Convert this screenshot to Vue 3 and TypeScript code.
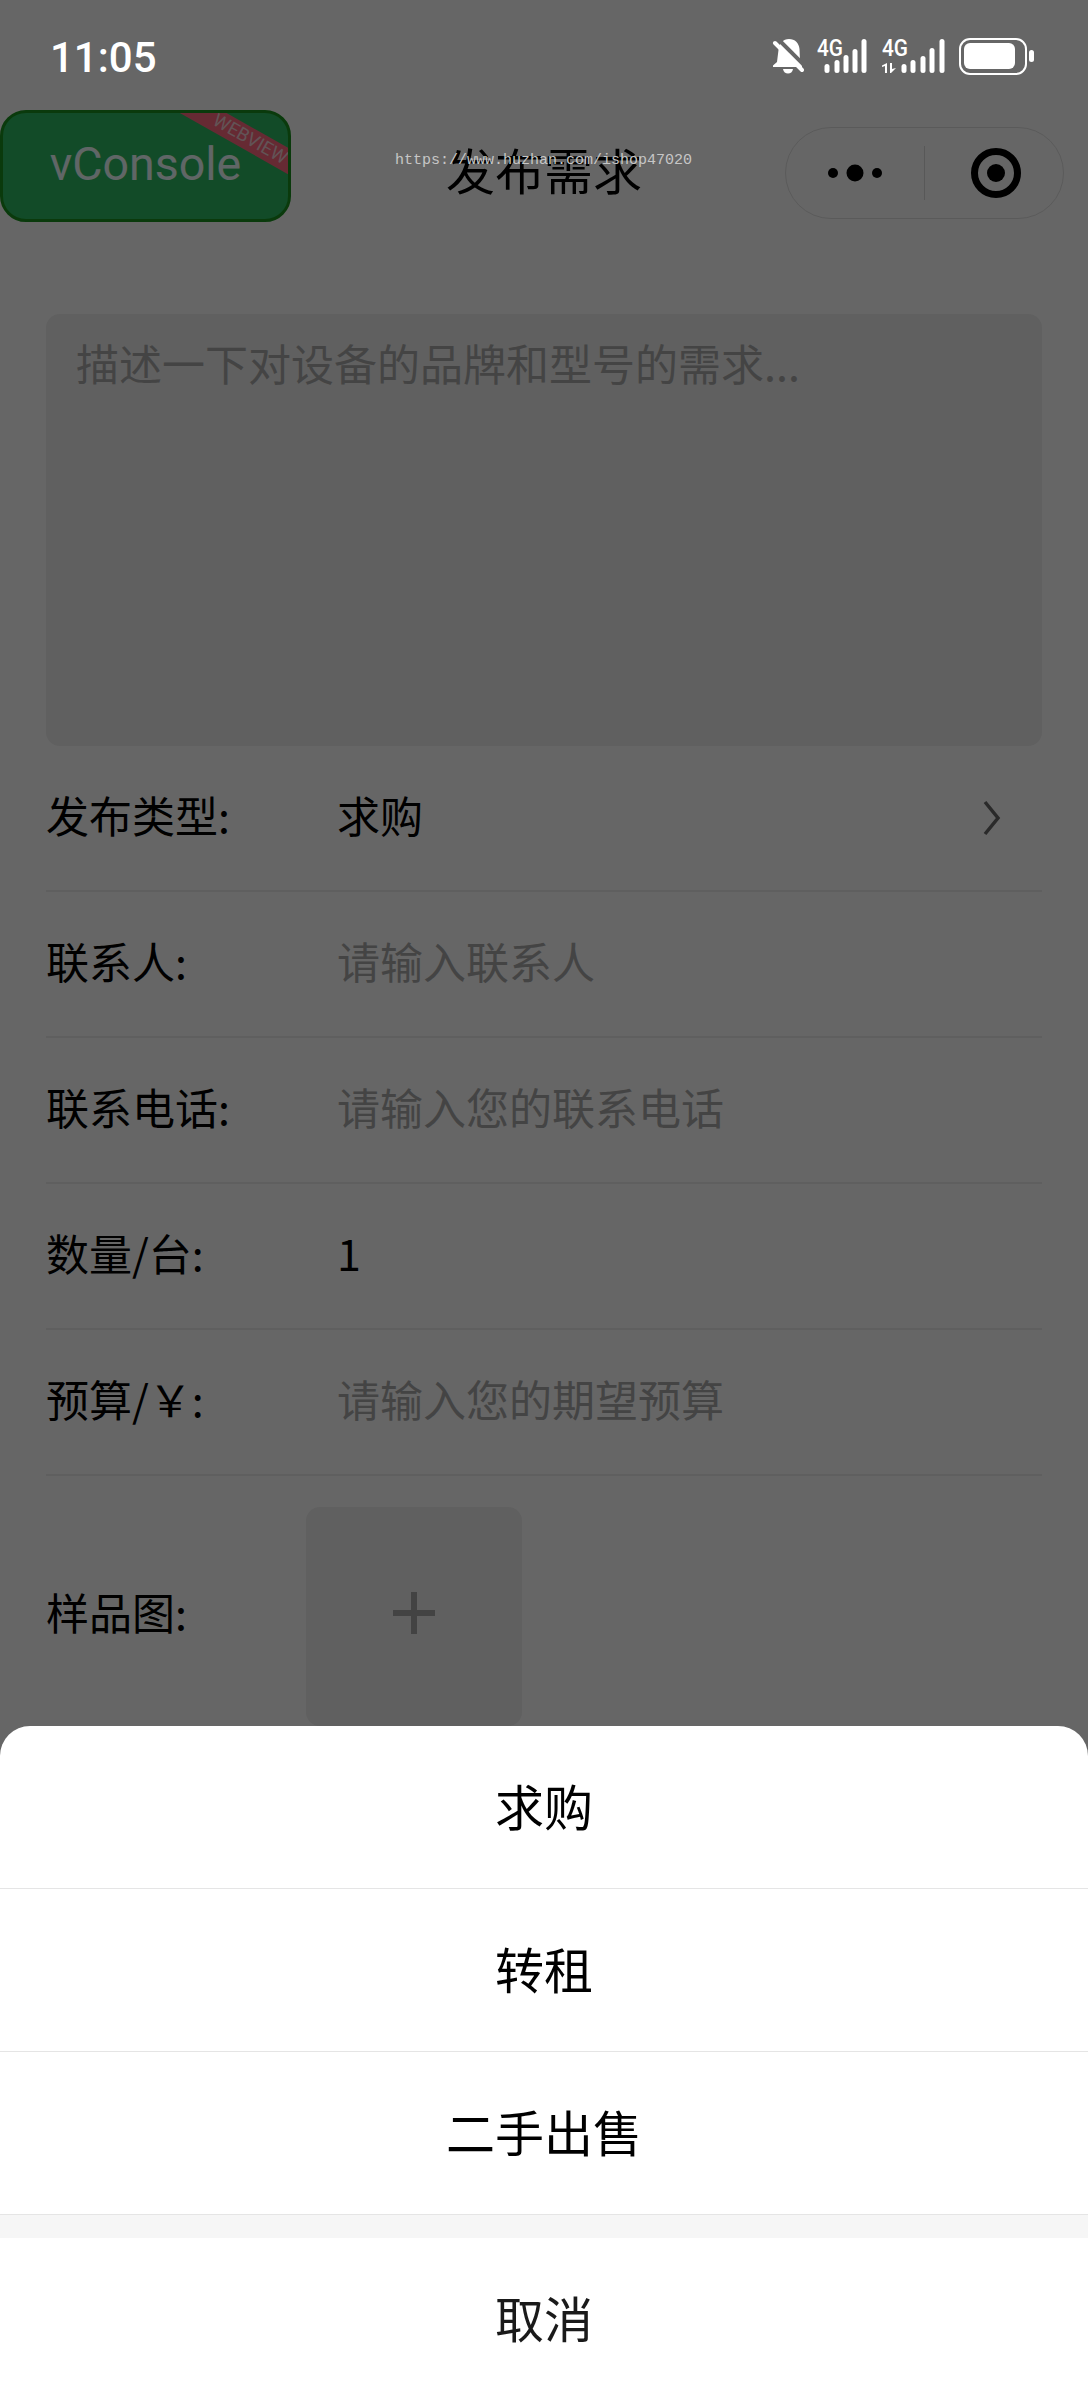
<script setup lang="ts">
interface Row { label: string; value: string; placeholder?: boolean; arrow?: boolean }
interface Bar { x: number; h: number }
const rows: Row[] = [
  { label: '发布类型:', value: '求购', arrow: true },
  { label: '联系人:', value: '请输入联系人', placeholder: true },
  { label: '联系电话:', value: '请输入您的联系电话', placeholder: true },
  { label: '数量/台:', value: '1' },
  { label: '预算/￥:', value: '请输入您的期望预算', placeholder: true },
]
const options: string[] = ['求购', '转租', '二手出售']
const bars1: Bar[] = [
  { x: 7.5, h: 9 }, { x: 17.5, h: 13 }, { x: 26.5, h: 18 }, { x: 35.5, h: 24 }, { x: 44.5, h: 34 },
]
const bars2: Bar[] = [
  { x: 19.5, h: 9 }, { x: 28.5, h: 13 }, { x: 38.5, h: 17 }, { x: 47.5, h: 25 }, { x: 57.5, h: 34 },
]
</script>

<template>
  <div class="page">
    <div class="status">
      <span class="time">11:05</span>
      <div class="status-icons">
        <svg class="bell" width="32" height="36" viewBox="0 0 32 36">
          <path d="M17 1c6 0 10 4 10.500 10l.5 12 2 5v1H1v-1.500l4-3.500 1.500-12C7.500 5 11 1 17 1z" fill="#fff" />
          <path d="M11 31h10c-.5 3-2.500 4.500-5 4.500s-4.500-1.500-5-4.500z" fill="#fff" />
          <path d="M5 0l30 30" stroke="#666" stroke-width="4" />
          <path d="M3 5l27 27" stroke="#fff" stroke-width="4" stroke-linecap="round" />
        </svg>
        <svg class="sig" width="52" height="36" viewBox="0 0 52 36">
          <text x="0" y="18" class="net" textLength="26" lengthAdjust="spacingAndGlyphs">4G</text>
          <g fill="#fff">
            <rect v-for="b in bars1" :key="b.x" :x="b.x" :y="35 - b.h" width="5" :height="b.h" rx="2.500" />
          </g>
        </svg>
        <svg class="sig2" width="63" height="36" viewBox="0 0 63 36">
          <text x="0" y="18" class="net" textLength="26" lengthAdjust="spacingAndGlyphs">4G</text>
          <g fill="#fff">
            <path d="M5 25v10H3v-7l-3 1v-1.500z" />
            <path d="M8 35V25h2v6l4-1-5 5z" />
            <rect v-for="b in bars2" :key="b.x" :x="b.x" :y="35 - b.h" width="5" :height="b.h" rx="2.500" />
          </g>
        </svg>
        <div class="battery"><div class="battery-fill"></div></div>
        <div class="nub"></div>
      </div>
    </div>

    <div class="nav">
      <span class="title">发布需求</span>
      <div class="capsule">
        <div class="cap-side">
          <svg width="62" height="20" viewBox="0 0 62 20">
            <circle cx="9" cy="10" r="5" fill="#000" />
            <circle cx="31" cy="10" r="8.500" fill="#000" />
            <circle cx="53" cy="10" r="5" fill="#000" />
          </svg>
        </div>
        <div class="cap-line"></div>
        <div class="cap-side">
          <svg class="record" width="52" height="52" viewBox="0 0 52 52">
            <circle cx="26" cy="26" r="21.500" fill="none" stroke="#000" stroke-width="7" />
            <circle cx="26" cy="26" r="9" fill="#000" />
          </svg>
        </div>
      </div>
    </div>

    <div class="form">
      <div class="textbox">描述一下对设备的品牌和型号的需求...</div>
      <div v-for="row in rows" :key="row.label" class="row">
        <span class="label">{{ row.label }}</span>
        <span class="value" :class="{ ph: row.placeholder }">{{ row.value }}</span>
        <svg v-if="row.arrow" class="chev" width="20" height="36" viewBox="0 0 20 36">
          <path d="M3 2l13 16L3 34" fill="none" stroke="#6a6a6a" stroke-width="3.500" />
        </svg>
      </div>
      <div class="upload-row">
        <span class="upload-label">样品图:</span>
        <div class="tile">
          <svg class="plus" width="42" height="42" viewBox="0 0 42 42">
            <path d="M21 0v42M0 21h42" stroke="#a8a8a8" stroke-width="6" />
          </svg>
        </div>
      </div>
    </div>

    <div class="vconsole">
      <span class="vc-text">vConsole</span>
      <div class="ribbon">WEBVIEW</div>
    </div>

    <div class="mask"></div>
    <div class="watermark">https://www.huzhan.com/ishop47020</div>

    <div class="sheet">
      <div v-for="o in options" :key="o" class="opt">{{ o }}</div>
      <div class="gap"></div>
      <div class="opt cancel">取消</div>
    </div>
  </div>
</template>

<style>
html, body { margin: 0; padding: 0; background: #666; }
</style>

<style scoped>
.page {
  position: relative;
  width: 1088px;
  height: 2400px;
  overflow: hidden;
  background: #fff;
  color: #000;
  font-family: "Noto Sans CJK SC", "Noto Sans", sans-serif;
}
.status {
  position: relative;
  z-index: 3;
  height: 110px;
  display: flex;
  align-items: flex-start;
  justify-content: space-between;
  padding: 0 54px 0 50px;
  box-sizing: border-box;
}
.time {
  margin-top: 29px;
  font: 500 42px/58px Roboto, sans-serif;
  color: #fff;
}
.status-icons {
  display: flex;
  align-items: center;
  height: 38px;
  margin-top: 37px;
}
.bell { margin-right: 13px; }
.sig { margin-right: 13px; }
.sig2 { margin-right: 14px; }
.net { font: 500 24px Roboto, sans-serif; fill: #fff; }
.battery {
  width: 68px;
  height: 37px;
  border: 2.500px solid #fff;
  border-radius: 11px;
  box-sizing: border-box;
  padding: 3px 2.500px;
}
.battery-fill {
  width: 51px;
  height: 26px;
  background: #fff;
  border-radius: 6px;
}
.nub {
  width: 5px;
  height: 12px;
  margin-left: 2px;
  background: #fff;
  border-radius: 2.500px;
}
.nav {
  position: relative;
  height: 126px;
  box-sizing: border-box;
  padding-bottom: 8px;
  display: flex;
  align-items: center;
  justify-content: center;
}
.title {
  font-size: 49px;
  line-height: 64px;
}
.capsule {
  position: absolute;
  top: 17px;
  left: 785px;
  width: 279px;
  height: 92px;
  display: flex;
  align-items: center;
  box-sizing: border-box;
  border: 1px solid #e2e2e2;
  border-radius: 46px;
}
.cap-side {
  flex: 1;
  display: flex;
  justify-content: center;
  align-items: center;
}
.record { margin-left: 4px; }
.cap-line {
  width: 1px;
  height: 54px;
  background: #dcdcdc;
}
.form {
  padding: 78px 46px 0;
}
.textbox {
  height: 432px;
  box-sizing: border-box;
  padding: 18px 30px;
  background: #f0f0f0;
  border-radius: 14px;
  font-size: 43px;
  line-height: 60px;
  color: #aaa;
}
.row {
  height: 146px;
  box-sizing: border-box;
  padding-bottom: 8px;
  display: flex;
  align-items: center;
  border-bottom: 2px solid #eee;
  font-size: 43px;
}
.label { width: 291px; flex: none; }
.value { flex: 1; }
.ph { color: #aaa; }
.chev { margin: 7px 40px 0 0; }
.upload-row {
  display: flex;
  align-items: center;
  padding-top: 31px;
  font-size: 43px;
}
.upload-label { width: 260px; flex: none; margin-bottom: 12px; }
.tile {
  width: 216px;
  height: 219px;
  border-radius: 14px;
  background: #f0f0f0;
  display: flex;
  align-items: center;
  justify-content: center;
}
.plus { margin-bottom: 8px; }
.vconsole {
  position: absolute;
  left: 0;
  top: 110px;
  width: 291px;
  height: 112px;
  box-sizing: border-box;
  border: 3.500px solid #19921e;
  border-radius: 26px;
  background: #2dbc64;
  overflow: hidden;
  display: flex;
  align-items: center;
  justify-content: center;
  color: #f0ffff;
  font: 400 46.500px Roboto, sans-serif;
}
.vc-text { margin-bottom: 4px; }
.ribbon {
  position: absolute;
  left: 162px;
  top: 15px;
  width: 170px;
  height: 23px;
  transform: rotate(29.500deg);
  background: #ff6a80;
  color: #f4d0d6;
  font: 400 18.500px/23px Roboto, sans-serif;
  text-align: center;
}
.mask {
  position: absolute;
  inset: 0;
  z-index: 1;
  background: rgba(0, 0, 0, 0.6);
}
.watermark {
  position: absolute;
  z-index: 2;
  left: 395px;
  top: 151px;
  font: 400 15px/20px "Liberation Mono", monospace;
  color: #c6c6c6;
}
.sheet {
  position: absolute;
  z-index: 3;
  left: 0;
  right: 0;
  bottom: 0;
  background: #fff;
  border-radius: 30px 30px 0 0;
  display: flex;
  flex-direction: column;
}
.opt {
  height: 163px;
  box-sizing: border-box;
  padding-bottom: 5px;
  display: flex;
  align-items: center;
  justify-content: center;
  font-size: 49px;
  line-height: 56px;
  border-bottom: 1px solid #e5e5e5;
}
.gap {
  height: 23px;
  background: #f6f6f6;
}
.cancel {
  height: 162px;
  border-bottom: none;
  color: #1a1a1a;
}
</style>
